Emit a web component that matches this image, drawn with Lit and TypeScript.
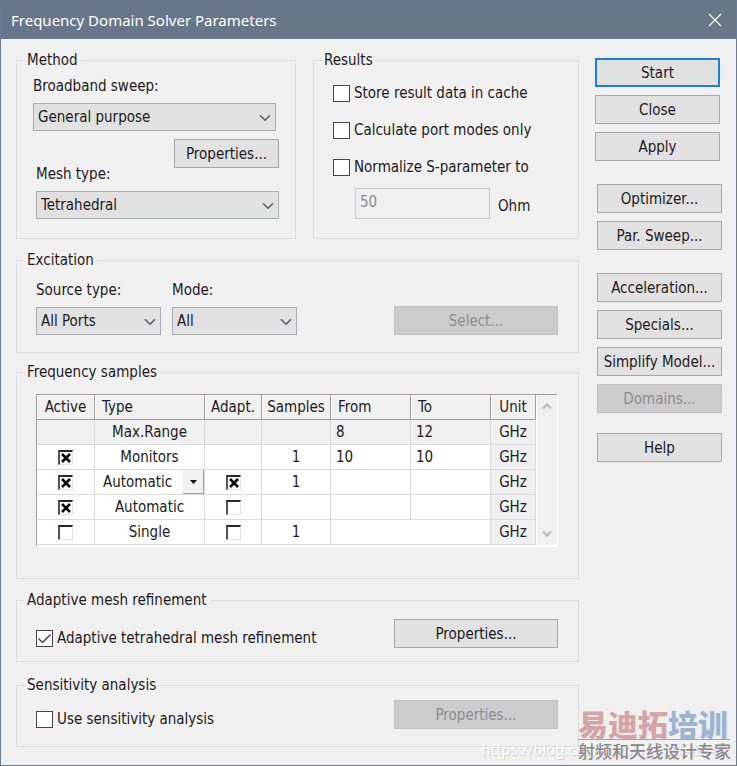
import { LitElement, html, css, nothing } from "lit";
import { customElement, property } from "lit/decorators.js";

const controls = css`
  * { box-sizing: border-box; }
  button, select, input {
    font: inherit;
    color: inherit;
    margin: 0;
    border-radius: 0;
  }
  button {
    height: 29px;
    padding: 0 4px;
    border: 1px solid #a8a8a8;
    background: #e1e1e1;
    line-height: 20px;
    white-space: nowrap;
  }
  button:disabled {
    border-color: #bfbfbf;
    background: #cccccc;
    color: #8d8a8c;
  }
`;

@customElement("drop-down")
class DropDown extends LitElement {
  @property() label = "";
  @property({ attribute: false }) options: string[] = [];

  static styles = [
    controls,
    css`
      :host { display: block; }
      label { display: block; line-height: 20px; margin-bottom: 7px; }
      .box { position: relative; display: block; }
      select {
        display: block;
        width: 100%;
        height: 28px;
        padding: 0 24px 0 4px;
        appearance: none;
        border: 1px solid #a8adb0;
        background: #e1e1e1;
      }
      svg {
        position: absolute;
        right: 5px;
        top: 11px;
        pointer-events: none;
      }
    `,
  ];

  render() {
    return html`
      <label for="list">${this.label}</label>
      <span class="box">
        <select id="list">
          ${this.options.map((o) => html`<option>${o}</option>`)}
        </select>
        <svg width="12" height="8" viewBox="0 0 12 8" fill="none" stroke="#605c62" stroke-width="1.6">
          <path d="M1 1.200 6 6.200 11 1.200" />
        </svg>
      </span>
    `;
  }
}

@customElement("check-option")
class CheckOption extends LitElement {
  @property() label = "";
  @property({ type: Boolean }) checked = false;

  static styles = css`
    :host { display: block; }
    label { display: flex; align-items: center; gap: 4px; line-height: 20px; white-space: nowrap; }
    .tick { position: relative; display: block; width: 17px; height: 17px; flex: none; }
    input {
      display: block;
      width: 17px;
      height: 17px;
      margin: 0;
      appearance: none;
      border: 1px solid #4b3f4b;
      background: #fff;
    }
    svg { position: absolute; inset: 0; display: none; pointer-events: none; }
    input:checked + svg { display: block; }
  `;

  render() {
    return html`
      <label>
        <span class="tick">
          <input type="checkbox" .checked=${this.checked} />
          <svg width="17" height="17" viewBox="0 0 17 17" fill="none" stroke="#4b454b" stroke-width="1.5">
            <path d="M2.500 8.500 6.500 12.500 14.500 4.500" />
          </svg>
        </span>
        <span>${this.label}</span>
      </label>
    `;
  }
}

interface Sample {
  active?: boolean;
  type: string;
  editing?: boolean;
  adapt?: boolean;
  samples: string;
  from?: string;
  to?: string;
  merged?: boolean;
  header?: boolean;
}

const SAMPLES: Sample[] = [
  { type: "Max.Range", samples: "", from: "8", to: "12", header: true },
  { active: true, type: "Monitors", samples: "1", from: "10", to: "10" },
  { active: true, type: "Automatic", editing: true, adapt: true, samples: "1" },
  { active: true, type: "Automatic", adapt: false, samples: "" },
  { active: false, type: "Single", adapt: false, samples: "1", merged: true },
];

@customElement("sample-table")
class SampleTable extends LitElement {
  static styles = [
    controls,
    css`
      :host { display: block; }
      .frame {
        display: flex;
        border: 1px solid #a09c9e;
        border-right: 1px solid #fff;
        border-bottom: 2px solid #fff;
      }
      table {
        flex: 1;
        width: 100%;
        min-width: 0;
        table-layout: fixed;
        border-collapse: separate;
        border-spacing: 0;
        background: #fff;
      }
      th, td {
        height: 25px;
        padding: 0;
        line-height: 20px;
        text-align: center;
        font-weight: 400;
        white-space: nowrap;
        border-right: 1px solid #dadada;
        border-bottom: 1px solid #dadada;
      }
      th {
        background: #f0f0f0;
        border-right: 1px solid #a09c9e;
        border-bottom: 1px solid #a09c9e;
        box-shadow: inset 1px 1px #fff;
      }
      th.start { text-align: left; padding-left: 7px; }
      td.start { text-align: left; padding-left: 5px; }
      .range td, td.unit { background: #f0f0f0; }
      .active { width: 58px; }
      .type { width: 110px; }
      .adapt { width: 57px; }
      .samples { width: 69px; }
      .unit { width: 45px; }
      .tick { position: relative; display: block; width: 15px; height: 15px; margin: 0 auto; }
      .tick input {
        display: block;
        width: 15px;
        height: 15px;
        appearance: none;
        border: 1px solid #e3e3e3;
        border-top: 2px solid #2c262c;
        border-left: 2px solid #5a4e58;
        background: #fff;
      }
      .tick svg { position: absolute; left: 3px; top: 3px; display: none; pointer-events: none; }
      .tick input:checked + svg { display: block; }
      .editor { position: relative; display: block; }
      .editor select {
        display: block;
        width: 100%;
        height: 24px;
        padding: 0 24px 0 8px;
        appearance: none;
        border: 0;
        background: #fff;
      }
      .arrow {
        position: absolute;
        right: 0;
        top: 0;
        width: 21px;
        height: 24px;
        display: grid;
        place-items: center;
        background: #f0f0f0;
        border-right: 1px solid #a8a4a6;
        border-bottom: 1px solid #a8a4a6;
        pointer-events: none;
      }
      .scroll {
        flex: none;
        width: 21px;
        display: flex;
        flex-direction: column;
        justify-content: space-between;
        background: #f0f0f0;
        border-left: 1px solid #fff;
      }
      .scroll button {
        display: grid;
        place-items: center;
        width: 100%;
        height: 22px;
        padding: 0;
        border: 0;
        background: none;
      }
    `,
  ];

  private tick(value: boolean | undefined, label: string) {
    if (value === undefined) return nothing;
    return html`<span class="tick">
      <input type="checkbox" aria-label=${label} .checked=${value} />
      <svg width="10" height="10" viewBox="0 0 10 10" fill="none" stroke="#0c080c" stroke-width="2.6">
        <path d="M1 1 9 9M9 1 1 9" />
      </svg>
    </span>`;
  }

  private type(row: Sample) {
    if (!row.editing) return row.type;
    return html`<span class="editor">
      <select aria-label="Type">
        <option>Automatic</option>
        <option>Single</option>
        <option>Monitors</option>
      </select>
      <span class="arrow">
        <svg width="7" height="4" viewBox="0 0 7 4" fill="#0c080c"><path d="M0 0H7L3.500 4Z" /></svg>
      </span>
    </span>`;
  }

  private chevron(d: string) {
    return html`<svg width="10" height="8" viewBox="0 0 10 8" fill="none" stroke="#bdbdbd" stroke-width="2.4">
      <path d=${d} />
    </svg>`;
  }

  render() {
    return html`
      <div class="frame">
        <table>
          <thead>
            <tr>
              <th class="active">Active</th>
              <th class="type start">Type</th>
              <th class="adapt">Adapt.</th>
              <th class="samples">Samples</th>
              <th class="start">From</th>
              <th class="start">To</th>
              <th class="unit">Unit</th>
            </tr>
          </thead>
          <tbody>
            ${SAMPLES.map(
              (r) => html`<tr class=${r.header ? "range" : ""}>
                <td>${this.tick(r.active, "Active")}</td>
                <td>${this.type(r)}</td>
                <td>${this.tick(r.adapt, "Adapt.")}</td>
                <td>${r.samples}</td>
                ${r.merged
                  ? html`<td class="start" colspan="2"></td>`
                  : html`<td class="start">${r.from}</td><td class="start">${r.to}</td>`}
                <td class="unit">GHz</td>
              </tr>`
            )}
          </tbody>
        </table>
        <div class="scroll">
          <button type="button" aria-label="Scroll up">${this.chevron("M1 6.500 5 2.500 9 6.500")}</button>
          <button type="button" aria-label="Scroll down">${this.chevron("M1 1.500 5 5.500 9 1.500")}</button>
        </div>
      </div>
    `;
  }
}

@customElement("app-root")
class AppRoot extends LitElement {
  static styles = [
    controls,
    css`
      :host {
        display: block;
        position: relative;
        box-sizing: border-box;
        min-height: 100vh;
        border: 1px solid #6b7a90;
        background: #f0f0f0;
        color: #1e1a20;
        font: 15px/20px "DejaVu Sans Condensed", "Noto Sans", "Noto Sans CJK SC", sans-serif;
      }
      header {
        display: flex;
        align-items: center;
        justify-content: space-between;
        height: 38px;
        padding: 0 14px 0 10px;
        background: #687689;
        color: #fff;
      }
      h1 { margin: 0; font: 400 15px/20px "Noto Sans", sans-serif; }
      header button {
        display: grid;
        place-items: center;
        width: 14px;
        height: 14px;
        padding: 0;
        border: 0;
        background: none;
      }
      main {
        display: grid;
        grid-template-columns: minmax(0, 1fr) 127px;
        gap: 16px;
        padding: 12px 14px 16px 15px;
      }
      .groups { display: flex; flex-direction: column; gap: 12px; }
      .top { display: grid; grid-template-columns: 280fr 266fr; gap: 17px; }
      fieldset {
        min-width: 0;
        margin: 0;
        padding: 11px 20px 17px 19px;
        border: 1px solid #dcdcdc;
      }
      legend { margin-left: -11px; padding: 0 3px 0 2px; line-height: 18px; }
      .method { padding: 7px 16px 19px; }
      .method legend { margin-left: -8px; }
      .method .first { padding-right: 3px; }
      .method .second { padding-left: 3px; margin-top: -20px; }
      .tools { display: flex; justify-content: flex-end; margin-top: 8px; }
      .tools button { width: 105px; margin-bottom: 16px; }
      .results { display: flex; flex-direction: column; gap: 17px; padding: 14px 16px 18px 19px; }
      .norm { display: flex; align-items: center; gap: 8px; margin: -6px 0 0 22px; }
      .norm label { padding-top: 4px; }
      .norm input {
        width: 135px;
        height: 31px;
        padding: 0 4px 4px;
        border: 1px solid #c8c8c8;
        background: #f0f0f0;
        color: #8d8a8c;
      }
      .row { display: flex; align-items: flex-end; gap: 11px; }
      .row drop-down { width: 125px; }
      .wide { width: 164px; margin-left: auto; }
      .samples { margin-top: -2px; padding: 13px 20px 31px 19px; }
      .toggle { padding: 10px 20px 13px 19px; }
      .toggle.last { margin-top: 2px; padding-top: 6px; padding-bottom: 17px; }
      aside { display: flex; flex-direction: column; gap: 23px; padding: 7px 0 0; }
      .stack { display: flex; flex-direction: column; gap: 8px; padding-left: 2px; }
      .stack.lead { padding: 0 2px 0 0; }
      .stack.last { margin-top: -3px; }
      .default { border: 2px solid #1a80d8; }
      .link {
        position: absolute;
        right: 8px;
        bottom: 6px;
        color: #fcfcfc;
        text-shadow: 1px 1px 1px #c8c8c8;
        font: 15px/20px "Noto Sans", sans-serif;
      }
      .brand { position: absolute; right: 6px; bottom: 3px; width: 152px; color: #8b888b; }
      .name {
        display: block;
        font: 900 30px/32px "Noto Sans CJK SC", sans-serif;
        color: #d3a5a6;
        border-bottom: 1px solid #a5a2a5;
      }
      .name span { color: #9cb4d1; }
      .motto { display: block; font: 500 17px/22px "Noto Sans CJK SC", sans-serif; white-space: nowrap; }
    `,
  ];

  render() {
    return html`
      <header>
        <h1>Frequency Domain Solver Parameters</h1>
        <button type="button" aria-label="Close window">
          <svg width="14" height="14" viewBox="0 0 14 14" stroke="#fff" stroke-width="1.2">
            <path d="M1 1 13 13M13 1 1 13" />
          </svg>
        </button>
      </header>
      <main>
        <div class="groups">
          <div class="top">
            <fieldset class="method">
              <legend>Method</legend>
              <drop-down class="first" label="Broadband sweep:" .options=${["General purpose"]}></drop-down>
              <div class="tools"><button type="button">Properties...</button></div>
              <drop-down class="second" label="Mesh type:" .options=${["Tetrahedral"]}></drop-down>
            </fieldset>
            <fieldset class="results">
              <legend>Results</legend>
              <check-option label="Store result data in cache"></check-option>
              <check-option label="Calculate port modes only"></check-option>
              <check-option label="Normalize S-parameter to"></check-option>
              <div class="norm">
                <input id="ohm" type="text" value="50" disabled />
                <label for="ohm">Ohm</label>
              </div>
            </fieldset>
          </div>
          <fieldset>
            <legend>Excitation</legend>
            <div class="row">
              <drop-down label="Source type:" .options=${["All Ports"]}></drop-down>
              <drop-down label="Mode:" .options=${["All"]}></drop-down>
              <button type="button" class="wide" disabled>Select...</button>
            </div>
          </fieldset>
          <fieldset class="samples">
            <legend>Frequency samples</legend>
            <sample-table></sample-table>
          </fieldset>
          <fieldset class="toggle">
            <legend>Adaptive mesh refinement</legend>
            <div class="row">
              <check-option label="Adaptive tetrahedral mesh refinement" checked></check-option>
              <button type="button" class="wide">Properties...</button>
            </div>
          </fieldset>
          <fieldset class="toggle last">
            <legend>Sensitivity analysis</legend>
            <div class="row">
              <check-option label="Use sensitivity analysis"></check-option>
              <button type="button" class="wide" disabled>Properties...</button>
            </div>
          </fieldset>
        </div>
        <aside>
          <div class="stack lead">
            <button type="button" class="default">Start</button>
            <button type="button">Close</button>
            <button type="button">Apply</button>
          </div>
          <div class="stack">
            <button type="button">Optimizer...</button>
            <button type="button">Par. Sweep...</button>
          </div>
          <div class="stack">
            <button type="button">Acceleration...</button>
            <button type="button">Specials...</button>
            <button type="button">Simplify Model...</button>
            <button type="button" disabled>Domains...</button>
          </div>
          <div class="stack last">
            <button type="button">Help</button>
          </div>
        </aside>
      </main>
      <span class="link">https://blog.csdn.net/qq_41542947</span>
      <div class="brand">
        <span class="name">易迪拓<span>培训</span></span>
        <span class="motto">射频和天线设计专家</span>
      </div>
    `;
  }
}
